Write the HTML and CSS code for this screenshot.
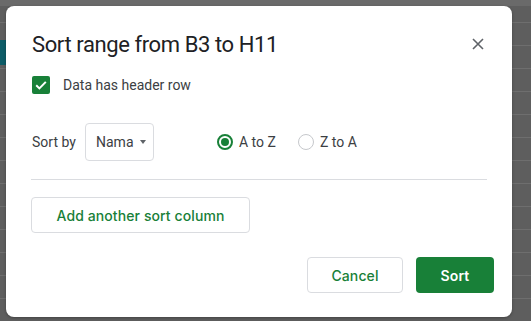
FILE: index.html
```html
<!DOCTYPE html>
<html>
<head>
    <meta charset="UTF-8">
    <title>Sort range</title>
    <link rel="stylesheet" href="styles.css">
</head>
<body>
    <div class="sheet-cell"></div>

    <div class="dialog">
        <div class="dialog-header">
            <h1 class="dialog-title">Sort range from B3 to H11</h1>
            <button class="close-button" aria-label="Close">
                <svg width="12" height="12" viewBox="0 0 12 12">
                    <path d="M1 1L11 11M11 1L1 11" stroke="#5f6368" stroke-width="1.6" fill="none"/>
                </svg>
            </button>
        </div>

        <label class="checkbox-row">
            <span class="checkbox">
                <svg width="18" height="18" viewBox="0 0 18 18">
                    <path d="M4.2 9.3L7.4 12.4L13.8 5.9" stroke="#fff" stroke-width="2" fill="none"/>
                </svg>
            </span>
            <span class="checkbox-label">Data has header row</span>
        </label>

        <div class="sort-row">
            <span class="sort-label">Sort by</span>
            <div class="select-box">
                <span>Nama</span>
                <span class="caret"></span>
            </div>
            <div class="radio-group">
                <label class="radio-item">
                    <span class="radio checked"></span>
                    <span>A to Z</span>
                </label>
                <label class="radio-item">
                    <span class="radio"></span>
                    <span>Z to A</span>
                </label>
            </div>
        </div>

        <div class="divider"></div>

        <button class="button outline add-button">Add another sort column</button>

        <div class="dialog-footer">
            <button class="button outline">Cancel</button>
            <button class="button primary">Sort</button>
        </div>
    </div>
</body>
</html>
```

FILE: styles.css
```css
:root {
    --green: #188038;
    --border: #dadce0;
    --text: #3c4043;
}

body {
    margin: 0;
    padding: 6px 0 0 6px;
    height: 321px;
    box-sizing: border-box;
    overflow: hidden;
    font-family: Roboto, "Liberation Sans", sans-serif;
    color: var(--text);
    background-color: #5e5e5e;
    background-image:
        linear-gradient(to bottom, #6a6a6a 0, #6a6a6a 6px, transparent 6px),
        repeating-linear-gradient(to bottom, transparent 0, transparent 22px, #6e6e6e 22px, #6e6e6e 23px);
    position: relative;
}

.sheet-cell {
    position: absolute;
    left: 0;
    top: 40px;
    width: 6px;
    height: 25px;
    background-color: #0d5c67;
}

.dialog {
    position: relative;
    width: 506px;
    height: 311px;
    box-sizing: border-box;
    background-color: white;
    border-radius: 8px;
    padding: 22px 18px 0 26px;
    box-shadow: 0 1px 3px rgba(0, 0, 0, 0.3);
}

.dialog-header {
    display: flex;
    align-items: center;
    justify-content: space-between;
    height: 32px;
}

.dialog-title {
    margin: 0;
    font-size: 22px;
    font-weight: 400;
    color: #202124;
    letter-spacing: -0.4px;
}

.close-button {
    width: 32px;
    height: 32px;
    border: none;
    background: none;
    padding: 0;
    display: flex;
    align-items: center;
    justify-content: center;
    cursor: pointer;
}

.checkbox-row {
    display: flex;
    align-items: center;
    margin-top: 16px;
    height: 18px;
}

.checkbox {
    width: 18px;
    height: 18px;
    border-radius: 2px;
    background-color: var(--green);
    display: flex;
}

.checkbox-label {
    margin-left: 13px;
    font-size: 14px;
}

.sort-row {
    display: flex;
    align-items: center;
    margin-top: 29px;
    height: 38px;
}

.sort-label {
    font-size: 14px;
    width: 53px;
}

.select-box {
    width: 69px;
    height: 38px;
    box-sizing: border-box;
    border: 1px solid var(--border);
    border-radius: 4px;
    display: flex;
    align-items: center;
    padding-left: 10px;
    font-size: 14px;
}

.caret {
    margin-left: 6px;
    width: 0;
    height: 0;
    border-left: 3.5px solid transparent;
    border-right: 3.5px solid transparent;
    border-top: 4px solid #5f6368;
}

.radio-group {
    display: flex;
    margin-left: 63px;
    gap: 22px;
}

.radio-item {
    display: flex;
    align-items: center;
    font-size: 14px;
    gap: 6px;
}

.radio {
    width: 16px;
    height: 16px;
    box-sizing: border-box;
    border-radius: 50%;
    border: 1.5px solid #c6c8cc;
    position: relative;
}

.radio.checked {
    border: 2px solid var(--green);
}

.radio.checked::after {
    content: "";
    position: absolute;
    left: 2px;
    top: 2px;
    width: 8px;
    height: 8px;
    border-radius: 50%;
    background-color: var(--green);
}

.divider {
    height: 1px;
    background-color: var(--border);
    margin: 18px 0 0 -1px;
    width: 456px;
}

.button {
    height: 36px;
    box-sizing: border-box;
    border-radius: 4px;
    font-family: Inter, Roboto, sans-serif;
    font-size: 14px;
    font-weight: 500;
    letter-spacing: 0.1px;
    cursor: pointer;
}

.button.outline {
    background-color: white;
    border: 1px solid var(--border);
    color: var(--green);
}

.button.primary {
    background-color: var(--green);
    border: none;
    color: white;
    font-weight: 600;
    width: 78px;
}

.add-button {
    display: block;
    width: 219px;
    margin: 17px 0 0 -1px;
}

.dialog-footer {
    display: flex;
    justify-content: flex-end;
    gap: 13px;
    margin-top: 24px;
}

.dialog-footer .outline {
    width: 96px;
}
```
